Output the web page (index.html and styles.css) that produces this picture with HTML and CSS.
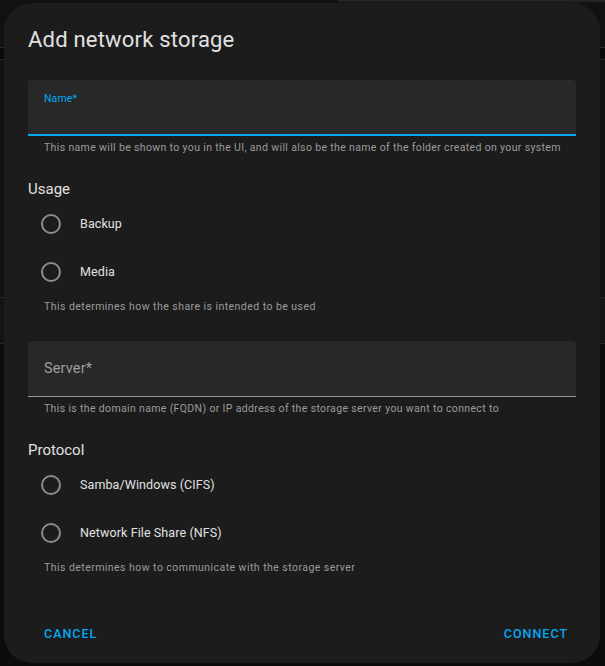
FILE: index.html
```html
<!DOCTYPE html>
<html lang="en">
<head>
<meta charset="utf-8">
<title>Add network storage</title>
<link rel="stylesheet" href="styles.css">
</head>
<body>
<div class="dialog">
  <header class="dialog-header">
    <h2 class="dialog-title">Add network storage</h2>
  </header>
  <div class="dialog-content">
    <div class="textfield textfield--focused">
      <span class="textfield-label textfield-label--floating">Name*</span>
    </div>
    <div class="helper">This name will be shown to you in the UI, and will also be the name of the folder created on your system</div>

    <div class="group-title">Usage</div>
    <label class="radio-row"><span class="radio"><span class="radio-circle"></span></span><span class="radio-label">Backup</span></label>
    <label class="radio-row"><span class="radio"><span class="radio-circle"></span></span><span class="radio-label">Media</span></label>
    <div class="helper helper--tight">This determines how the share is intended to be used</div>

    <div class="textfield textfield--server">
      <span class="textfield-label">Server*</span>
    </div>
    <div class="helper">This is the domain name (FQDN) or IP address of the storage server you want to connect to</div>

    <div class="group-title">Protocol</div>
    <label class="radio-row"><span class="radio"><span class="radio-circle"></span></span><span class="radio-label">Samba/Windows (CIFS)</span></label>
    <label class="radio-row"><span class="radio"><span class="radio-circle"></span></span><span class="radio-label">Network File Share (NFS)</span></label>
    <div class="helper helper--tight">This determines how to communicate with the storage server</div>
  </div>
  <footer class="dialog-actions">
    <button class="btn">Cancel</button>
    <button class="btn">Connect</button>
  </footer>
</div>
</body>
</html>
```

FILE: styles.css
```css
* { box-sizing: border-box; }

html, body {
  margin: 0;
  padding: 0;
}

body {
  width: 605px;
  height: 666px;
  overflow: hidden;
  font-family: Roboto, "Noto Sans", "Liberation Sans", sans-serif;
  background-color: #111111;
  background-image:
    linear-gradient(to bottom, transparent 47px, #2a2a2a 47px, #2a2a2a 48px, #0a0a0a 48px, #0a0a0a 59px, #262626 59px, #262626 60px, transparent 60px, transparent 297px, #262626 297px, #262626 298px, #141414 298px, #141414 343px, #262626 343px, #262626 344px, #0c0c0c 344px),
    linear-gradient(to right, transparent 338px, #232323 338px);
  background-size: 100% 100%, 100% 2px;
  background-repeat: no-repeat;
  padding: 3px 5px 3px 4px;
}

.dialog {
  width: 596px;
  height: 660px;
  background: #1c1c1c;
  border-radius: 28px;
  display: flex;
  flex-direction: column;
  color: #e1e1e1;
}

.dialog-header {
  padding: 21px 24px 24px;
}

.dialog-title {
  margin: 0;
  font-size: 22px;
  line-height: 32px;
  font-weight: 400;
  letter-spacing: 0.2px;
  color: #e1e1e1;
}

.dialog-content {
  padding: 0 24px;
  display: flex;
  flex-direction: column;
}

.textfield {
  height: 56px;
  background: #282828;
  border-radius: 4px 4px 0 0;
  border-bottom: 1px solid #9a9a9a;
  padding: 0 16px;
  display: flex;
  align-items: center;
}

.textfield--focused {
  border-bottom: 2px solid #03a9f4;
  align-items: flex-start;
  padding-top: 11px;
}

.textfield-label {
  font-size: 14.5px;
  line-height: 24px;
  color: #9e9e9e;
  letter-spacing: 0.15px;
}

.textfield-label--floating {
  font-size: 10.5px;
  line-height: 16px;
  color: #03a9f4;
  letter-spacing: 0.1px;
}

.helper {
  margin-top: 4px;
  padding: 0 16px;
  font-size: 10.5px;
  line-height: 16px;
  color: #9b9b9b;
  letter-spacing: 0.35px;
  white-space: nowrap;
}

.helper--tight {
  margin-top: 3px;
  letter-spacing: 0.45px;
}

.textfield--server {
  margin-top: 26px;
}

.group-title {
  margin-top: 22px;
  font-size: 15px;
  line-height: 22px;
  color: #e1e1e1;
  letter-spacing: 0;
}

.radio-row {
  height: 48px;
  display: flex;
  align-items: center;
}

.radio {
  width: 48px;
  height: 48px;
  display: flex;
  align-items: center;
  justify-content: center;
  margin-left: -1px;
}

.radio-circle {
  width: 20px;
  height: 20px;
  border: 2px solid #8c8c8c;
  border-radius: 50%;
}

.radio-label {
  padding-left: 5px;
  font-size: 12.5px;
  line-height: 20px;
  letter-spacing: 0.1px;
  color: #e1e1e1;
}

.dialog-actions {
  margin-top: 39px;
  height: 36px;
  padding: 0 28px 0 36px;
  display: flex;
  justify-content: space-between;
  align-items: center;
}

.btn {
  background: none;
  border: 0;
  padding: 0 4px;
  height: 36px;
  font-family: Roboto, "Noto Sans", "Liberation Sans", sans-serif;
  font-size: 12.5px;
  font-weight: 500;
  letter-spacing: 1px;
  text-transform: uppercase;
  color: #03a9f4;
}
```
